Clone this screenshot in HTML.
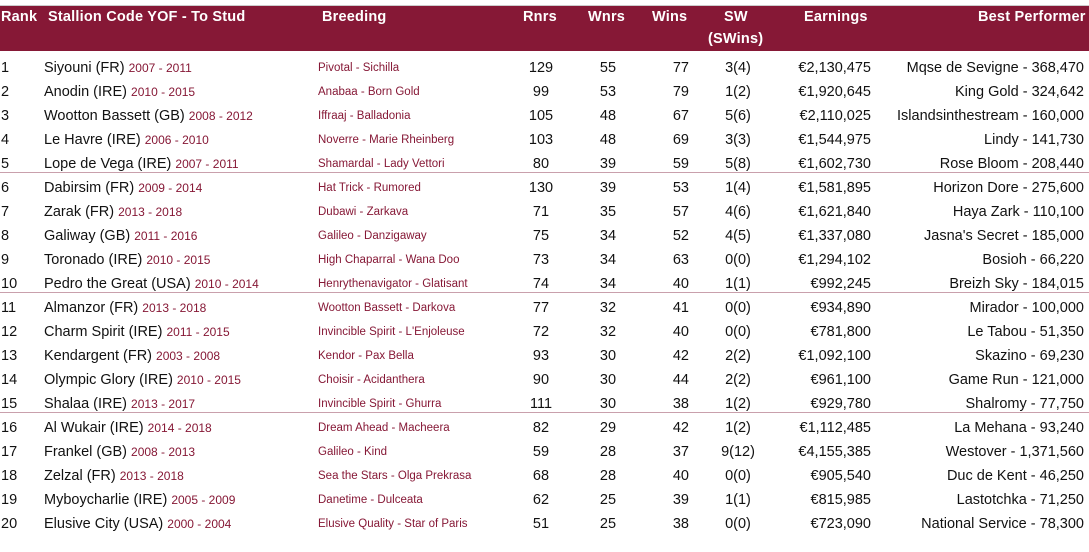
<!DOCTYPE html>
<html><head><meta charset="utf-8"><style>
body{margin:0;width:1089px;height:552px;background:#fff;font-family:"Liberation Sans",sans-serif;position:relative;overflow:hidden;color:#111}
.hd{position:absolute;left:0;top:5px;width:1089px;height:45px;background:#861836;border-top:1px solid #ccc}
.h{position:absolute;color:#fff;font-weight:bold;font-size:14.5px;top:3px;white-space:nowrap;letter-spacing:0.2px}
.r{position:absolute;left:0;width:1089px;height:24px;font-size:14.5px}
.r span{position:absolute;top:3px;white-space:nowrap}
.y{color:#861836;font-size:12px}
.b{color:#861836;font-size:11.5px;left:318px;top:5px!important}
.ln{position:absolute;left:0;width:1089px;height:1px;background:#c9a0ac}
.c{transform:translateX(-50%)}
.rt{transform:translateX(-100%)}
</style></head><body>
<div class="hd">
<div class="h" style="left:1px">Rank</div>
<div class="h" style="left:48px">Stallion Code YOF - To Stud</div>
<div class="h" style="left:322px">Breeding</div>
<div class="h" style="left:523px">Rnrs</div>
<div class="h" style="left:588px">Wnrs</div>
<div class="h" style="left:652px">Wins</div>
<div class="h" style="left:724px">SW</div>
<div class="h" style="left:708px;top:25px">(SWins)</div>
<div class="h" style="left:804px">Earnings</div>
<div class="h" style="left:978px">Best Performer</div>
</div>
<div id="rows"></div>
<div class="ln" style="top:172px"></div>
<div class="ln" style="top:292px"></div>
<div class="ln" style="top:412px"></div>
<script>
const d=[
["Siyouni (FR)","2007 - 2011","Pivotal - Sichilla",129,55,77,"3(4)","€2,130,475","Mqse de Sevigne - 368,470"],
["Anodin (IRE)","2010 - 2015","Anabaa - Born Gold",99,53,79,"1(2)","€1,920,645","King Gold - 324,642"],
["Wootton Bassett (GB)","2008 - 2012","Iffraaj - Balladonia",105,48,67,"5(6)","€2,110,025","Islandsinthestream - 160,000"],
["Le Havre (IRE)","2006 - 2010","Noverre - Marie Rheinberg",103,48,69,"3(3)","€1,544,975","Lindy - 141,730"],
["Lope de Vega (IRE)","2007 - 2011","Shamardal - Lady Vettori",80,39,59,"5(8)","€1,602,730","Rose Bloom - 208,440"],
["Dabirsim (FR)","2009 - 2014","Hat Trick - Rumored",130,39,53,"1(4)","€1,581,895","Horizon Dore - 275,600"],
["Zarak (FR)","2013 - 2018","Dubawi - Zarkava",71,35,57,"4(6)","€1,621,840","Haya Zark - 110,100"],
["Galiway (GB)","2011 - 2016","Galileo - Danzigaway",75,34,52,"4(5)","€1,337,080","Jasna's Secret - 185,000"],
["Toronado (IRE)","2010 - 2015","High Chaparral - Wana Doo",73,34,63,"0(0)","€1,294,102","Bosioh - 66,220"],
["Pedro the Great (USA)","2010 - 2014","Henrythenavigator - Glatisant",74,34,40,"1(1)","€992,245","Breizh Sky - 184,015"],
["Almanzor (FR)","2013 - 2018","Wootton Bassett - Darkova",77,32,41,"0(0)","€934,890","Mirador - 100,000"],
["Charm Spirit (IRE)","2011 - 2015","Invincible Spirit - L'Enjoleuse",72,32,40,"0(0)","€781,800","Le Tabou - 51,350"],
["Kendargent (FR)","2003 - 2008","Kendor - Pax Bella",93,30,42,"2(2)","€1,092,100","Skazino - 69,230"],
["Olympic Glory (IRE)","2010 - 2015","Choisir - Acidanthera",90,30,44,"2(2)","€961,100","Game Run - 121,000"],
["Shalaa (IRE)","2013 - 2017","Invincible Spirit - Ghurra",111,30,38,"1(2)","€929,780","Shalromy - 77,750"],
["Al Wukair (IRE)","2014 - 2018","Dream Ahead - Macheera",82,29,42,"1(2)","€1,112,485","La Mehana - 93,240"],
["Frankel (GB)","2008 - 2013","Galileo - Kind",59,28,37,"9(12)","€4,155,385","Westover - 1,371,560"],
["Zelzal (FR)","2013 - 2018","Sea the Stars - Olga Prekrasa",68,28,40,"0(0)","€905,540","Duc de Kent - 46,250"],
["Myboycharlie (IRE)","2005 - 2009","Danetime - Dulceata",62,25,39,"1(1)","€815,985","Lastotchka - 71,250"],
["Elusive City (USA)","2000 - 2004","Elusive Quality - Star of Paris",51,25,38,"0(0)","€723,090","National Service - 78,300"]];
let h="";
d.forEach((r,i)=>{const t=57+i*24;
h+=`<div class="r" style="top:${t}px"><span style="left:1px">${i+1}</span><span style="left:44px">${r[0]} <span class="y" style="position:static">${r[1]}</span></span><span class="b">${r[2]}</span><span class="c" style="left:541px">${r[3]}</span><span class="c" style="left:608px">${r[4]}</span><span class="rt" style="left:689px">${r[5]}</span><span class="c" style="left:738px">${r[6]}</span><span class="rt" style="left:871px">${r[7]}</span><span class="rt" style="left:1084px">${r[8]}</span></div>`;});
document.getElementById("rows").innerHTML=h;
</script>
</body></html>
